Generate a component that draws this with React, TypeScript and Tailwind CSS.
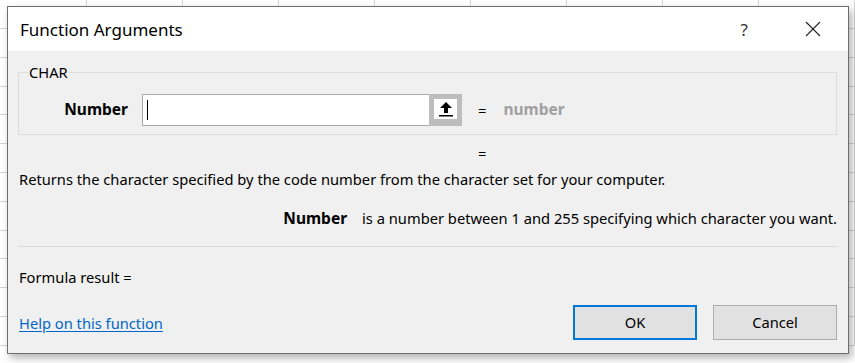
import React from 'react';

const ROWS = 12;
const COLS = 9;

function SheetGrid() {
  return (
    <div className="flex flex-col">
      {Array.from({ length: ROWS }).map((_, r) => (
        <div key={r} className={`flex border-b border-[#d4d4d4] box-border ${r === 0 ? 'h-[29px]' : 'h-[28.8px]'}`}>
          {Array.from({ length: COLS }).map((_, c) => (
            <div
              key={c}
              className={`h-full border-r border-[#d4d4d4] box-border shrink-0 ${c === 0 ? 'w-[87px]' : 'w-[96px]'}`}
            />
          ))}
        </div>
      ))}
    </div>
  );
}

function RefIcon() {
  return (
    <svg width="14" height="16" viewBox="0 0 14 16">
      <path d="M7 1 L13 7 L9 7 L9 12 L5 12 L5 7 L1 7 Z" fill="#000" />
      <rect x="0" y="14" width="14" height="1.5" fill="#000" />
    </svg>
  );
}

export default function App() {
  return (
    <div className="relative w-[855px] h-[363px] overflow-hidden bg-white font-['Noto_Sans',sans-serif] text-black">
      <SheetGrid />

      {/* dialog window */}
      <div className="absolute left-[7px] top-[6px] w-[842px] h-[348px] border border-[#6e6e6e] bg-[#f0f0f0] shadow-[3px_4px_8px_rgba(0,0,0,0.3)] flex flex-col">
        {/* title bar */}
        <div className="h-[44px] bg-white flex items-center pl-[12px] shrink-0">
          <span className="text-[17px] leading-none">Function Arguments</span>
          <span className="ml-auto text-[17px] leading-none text-[#333] mr-[57px]">?</span>
          <svg width="16" height="16" viewBox="0 0 16 16" className="mr-[27px]">
            <path d="M1 1 L15 15 M15 1 L1 15" stroke="#222" strokeWidth="1.1" />
          </svg>
        </div>

        {/* body */}
        <div className="flex flex-col px-[10px] text-[14.7px]">
          <fieldset className="mt-[11px] mr-[1px] border border-[#dcdcdc] h-[73px] px-[9px]">
            <legend className="px-[1px] leading-[20px]">CHAR</legend>
            <div className="flex items-center mt-[12px]">
              <span className="font-bold text-[15.5px] w-[100px] text-right">Number</span>
              <div className="ml-[14px] w-[288px] h-[32px] bg-white border border-[#ababab] flex items-center pl-[4px]">
                <div className="w-px h-[20px] bg-black" />
              </div>
              <div className="w-[33px] h-[32px] border-t-[5px] border-x-[5px] border-b-[7px] border-[#bdbdbd] bg-white flex items-center justify-center -ml-px">
                <RefIcon />
              </div>
              <span className="ml-[16px]">=</span>
              <span className="ml-[17px] font-bold text-[15.5px] text-[#a0a0a0]">number</span>
            </div>
          </fieldset>

          <div className="h-[20px] mt-[8px] pl-[460px] leading-[20px]">=</div>
          <p className="mt-[6px] pl-[1px] leading-[20px]">
            Returns the character specified by the code number from the character set for your computer.
          </p>
          <div className="mt-[19px] flex justify-end items-baseline pr-[1px] leading-[20px]">
            <span className="font-bold text-[15.5px]">Number</span>
            <span className="ml-[15px]">is a number between 1 and 255 specifying which character you want.</span>
          </div>
          <div className="mt-[18px] mr-[1px] h-px bg-[#dadada]" />
          <div className="mt-[20px] pl-[1px] leading-[20px]">Formula result =</div>

          <div className="mt-[18px] flex items-center pr-[1px]">
            <a href="#" className="pl-[1px] text-[#0066cc] underline underline-offset-2 leading-[20px]">
              Help on this function
            </a>
            <button className="ml-auto w-[124px] h-[35px] bg-[#e1e1e1] border-2 border-[#0078d7]">OK</button>
            <button className="ml-[16px] w-[124px] h-[35px] bg-[#e1e1e1] border border-[#adadad]">Cancel</button>
          </div>
        </div>
      </div>
    </div>
  );
}
